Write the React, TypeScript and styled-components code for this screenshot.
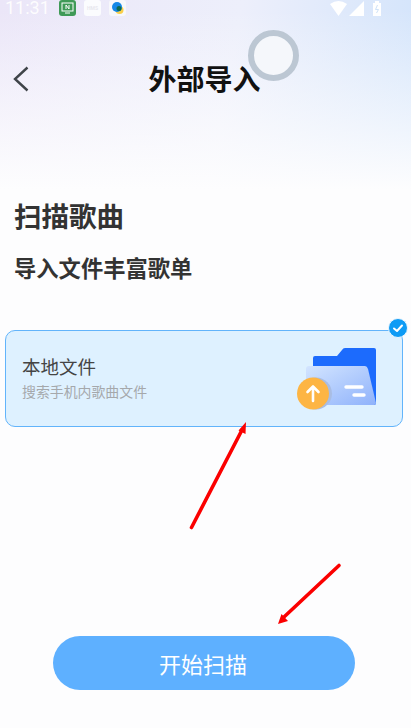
import styled, { createGlobalStyle } from "styled-components"

const GlobalStyle = createGlobalStyle`
  html, body {
    margin: 0;
    padding: 0;
    background: #fdfdfe;
  }
  * {
    box-sizing: border-box;
  }
`

const Page = styled.div`
  position: relative;
  width: 411px;
  height: 728px;
  overflow: hidden;
  display: flex;
  flex-direction: column;
  font-family: "Noto Sans CJK SC", Roboto, sans-serif;
  background:
    linear-gradient(180deg, rgba(253, 253, 254, 0) 10px, #fdfdfe 190px),
    linear-gradient(100deg, #ebe6f8 0%, #edeffb 45%, #c4defb 100%);
`

const StatusBar = styled.div`
  height: 16px;
  padding: 0 29px 0 5px;
  display: flex;
  align-items: center;
  justify-content: space-between;
`

const StatusLeft = styled.div`
  display: flex;
  align-items: center;
`

const Clock = styled.span`
  width: 54px;
  font-family: Roboto, sans-serif;
  font-size: 18px;
  line-height: 16px;
  color: #ffffff;
  opacity: 0.9;
`

const AppBadge = styled.div<{ $bg: string; $gap: number }>`
  width: 17px;
  height: 16px;
  margin-left: ${(p) => p.$gap}px;
  border-radius: 3px;
  background: ${(p) => p.$bg};
  display: flex;
  align-items: center;
  justify-content: center;
  font-family: Roboto, sans-serif;
  font-size: 5px;
  font-weight: 700;
  color: #e8e8ee;
`

const StatusRight = styled.div`
  display: flex;
  align-items: center;
  gap: 2px;
`

const NavBar = styled.div`
  position: relative;
  height: 58px;
  margin-top: 34px;
  display: flex;
  align-items: center;
  justify-content: center;
`

const BackButton = styled.div`
  position: absolute;
  left: 13px;
  top: 16px;
  display: flex;
`

const Title = styled.h1`
  margin: 0;
  font-size: 28px;
  line-height: 36px;
  font-weight: 700;
  color: #111111;
  transform: translate(-1px, -1px);
`

const FloatBall = styled.div`
  position: absolute;
  left: 248px;
  top: 30px;
  width: 51px;
  height: 51px;
  border-radius: 50%;
  border: 6px solid #bcc7d3;
  background: #f5f7fb;
`

const Intro = styled.div`
  margin-top: 88px;
  padding-left: 14px;
  display: flex;
  flex-direction: column;
`

const Heading = styled.h2`
  margin: 0;
  font-size: 27.500px;
  line-height: 38px;
  font-weight: 700;
  color: #333333;
`

const SubHeading = styled.h3`
  margin: 18px 0 0;
  font-size: 22.300px;
  line-height: 30px;
  font-weight: 700;
  color: #333333;
`

const Card = styled.div`
  position: relative;
  margin: 48px 8px 0 5px;
  height: 97px;
  padding: 0 25px 0 16px;
  display: flex;
  align-items: center;
  justify-content: space-between;
  background: #def1ff;
  border: 1px solid #62b4fb;
  border-radius: 10px;
`

const CardText = styled.div`
  display: flex;
  flex-direction: column;
  gap: 2px;
  margin-top: -3px;
`

const CardTitle = styled.div`
  font-size: 18.500px;
  line-height: 26px;
  color: #444444;
`

const CardDesc = styled.div`
  font-size: 13.900px;
  line-height: 20px;
  color: #a5a8ab;
`

const CheckBadge = styled.div`
  position: absolute;
  top: -13px;
  right: -6px;
  width: 20px;
  height: 20px;
  border-radius: 50%;
  background: #0e9bf5;
  border: 1px solid #eaf6ff;
  display: flex;
  align-items: center;
  justify-content: center;
`

const Footer = styled.div`
  margin-top: 209px;
  display: flex;
  justify-content: center;
  padding-right: 3px;
`

const StartButton = styled.button`
  width: 302px;
  height: 54px;
  padding: 0 8px 0 6px;
  border: none;
  border-radius: 27px;
  background: #5eb0ff;
  color: #ffffff;
  font-family: inherit;
  font-size: 22px;
`

const ArrowLayer = styled.svg`
  position: absolute;
  left: 0;
  top: 0;
  pointer-events: none;
`

const FolderIcon = () => (
  <svg width="80" height="62" viewBox="0 0 80 62">
    <defs>
      <linearGradient id="folderFront" x1="0" y1="0" x2="1" y2="1">
        <stop offset="0" stopColor="#d3e5ff" />
        <stop offset="1" stopColor="#8fb2fb" />
      </linearGradient>
    </defs>
    <path
      d="M16 10q0-2 2-2H40l5-6q1-2 3-2H77q2 0 2 2V55q0 2-2 2H16z"
      fill="#1c6bfd"
    />
    <path
      d="M12 18H68q2 0 3 3L79 55q0 2-2 2H12q-3 0-3-3V21q0-3 3-3z"
      fill="url(#folderFront)"
    />
    <circle cx="19" cy="45.500" r="16" fill="#a9bde3" />
    <circle cx="16" cy="45.500" r="16" fill="#fdb544" />
    <path
      d="M16 53V38.500M10.500 44L16 38.500l5.500 5.500"
      fill="none"
      stroke="#fff"
      strokeWidth="2.600"
      strokeLinecap="round"
      strokeLinejoin="round"
    />
    <path
      d="M49 39h16M57 47h10"
      fill="none"
      stroke="#fff"
      strokeWidth="3.400"
      strokeLinecap="round"
    />
  </svg>
)

export default function App() {
  return (
    <>
      <GlobalStyle />
      <Page>
        <StatusBar>
          <StatusLeft>
            <Clock>11:31</Clock>
            <AppBadge $bg="#3f9a57" $gap={0}>
              <svg width="13" height="12" viewBox="0 0 13 12">
                <rect x="1" y="1" width="11" height="8" fill="none" stroke="#fff" />
                <path d="M5 7V3l3 4V3M4 11h5" fill="none" stroke="#fff" />
              </svg>
            </AppBadge>
            <AppBadge $bg="#fbfcfe" $gap={8}>HMS</AppBadge>
            <AppBadge $bg="#f7f8fb" $gap={8}>
              <svg width="14" height="14" viewBox="0 0 14 14">
                <circle cx="8.500" cy="9" r="4" fill="#f9cf4a" />
                <circle cx="6" cy="6" r="5" fill="#1488e6" />
                <circle cx="8" cy="7.500" r="2.500" fill="#0e6a52" />
              </svg>
            </AppBadge>
          </StatusLeft>
          <StatusRight>
            <svg width="17" height="15" viewBox="0 0 17 15">
              <path d="M0 3Q8.500-3 17 3L8.500 15z" fill="#fff" />
            </svg>
            <svg width="15" height="15" viewBox="0 0 15 15">
              <path d="M15 0V15H0z" fill="#fff" />
            </svg>
            <svg width="10" height="15" viewBox="0 0 10 15" style={{ marginLeft: 6 }}>
              <path d="M3 0h4v2h2v13H1V2h2z" fill="#fff" />
              <path d="M5.500 4L3.500 8.500h3L4.500 12" fill="none" stroke="#cfe2f8" />
            </svg>
          </StatusRight>
        </StatusBar>

        <NavBar>
          <BackButton>
            <svg width="16" height="26" viewBox="0 0 16 26">
              <path
                d="M14.500 1.500L2 13l12.500 11.500"
                fill="none"
                stroke="#3f4449"
                strokeWidth="2.400"
              />
            </svg>
          </BackButton>
          <Title>外部导入</Title>
        </NavBar>
        <FloatBall />

        <Intro>
          <Heading>扫描歌曲</Heading>
          <SubHeading>导入文件丰富歌单</SubHeading>
        </Intro>

        <Card>
          <CardText>
            <CardTitle>本地文件</CardTitle>
            <CardDesc>搜索手机内歌曲文件</CardDesc>
          </CardText>
          <FolderIcon />
          <CheckBadge>
            <svg width="14" height="14" viewBox="0 0 14 14">
              <path
                d="M3 7.500L6 10l5-5.500"
                fill="none"
                stroke="#fff"
                strokeWidth="2"
                strokeLinecap="round"
                strokeLinejoin="round"
              />
            </svg>
          </CheckBadge>
        </Card>

        <Footer>
          <StartButton>开始扫描</StartButton>
        </Footer>

        <ArrowLayer width="411" height="728" viewBox="0 0 411 728">
          <path d="M191.500 527.500L242 430" stroke="#fb0000" strokeWidth="3.600" strokeLinecap="round" />
          <path d="M246 422L238.500 430.500L245.500 434z" fill="#fb0000" />
          <path d="M339 565.500L284 617" stroke="#fb0000" strokeWidth="3.600" strokeLinecap="round" />
          <path d="M278 624L281.500 614L288 621z" fill="#fb0000" />
        </ArrowLayer>
      </Page>
    </>
  )
}
